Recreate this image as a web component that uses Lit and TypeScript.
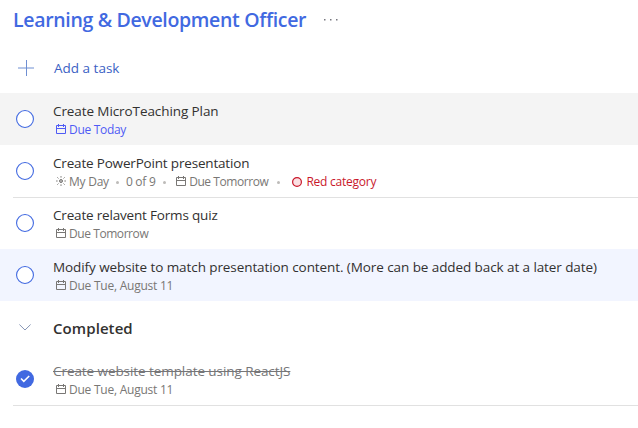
import { LitElement, html, svg, css, nothing } from "lit";
import { customElement, property } from "lit/decorators.js";
import { classMap } from "lit/directives/class-map.js";

interface Task {
  title: string;
  due: string;
  today?: boolean;
  tomorrow?: boolean;
  myDay?: boolean;
  steps?: string;
  category?: string;
  tone?: "hover" | "selected" | "ruled";
  done?: boolean;
}

const tasks: Task[] = [
  { title: "Create MicroTeaching Plan", due: "Due Today", today: true, tone: "hover" },
  { title: "Create PowerPoint presentation", due: "Due Tomorrow", tomorrow: true, myDay: true, steps: "0 of 9", category: "Red category" },
  { title: "Create relavent Forms quiz", due: "Due Tomorrow", tomorrow: true, tone: "ruled" },
  { title: "Modify website to match presentation content. (More can be added back at a later date)", due: "Due Tue, August 11", tone: "selected" },
];

const finished: Task[] = [{ title: "Create website template using ReactJS", due: "Due Tue, August 11", done: true }];

const calendar = html`<svg class="icon" width="10" height="10" viewBox="0 0 10 10" fill="none" stroke="currentColor">
  ${svg`<path d="M.5 1.500h9v8h-9zM.5 4.500h9M2.500 0v3M7.500 0v3"/>`}
</svg>`;

const sun = html`<svg class="icon" width="10" height="10" viewBox="0 0 10 10" fill="none" stroke="currentColor">
  ${svg`<circle cx="5" cy="5" r="1.500" fill="currentColor" fill-opacity=".5"/><path stroke-width=".9" d="M5 0v1.700M5 8.300v1.700M0 5h1.700M8.300 5H10M1.300 1.300l1.200 1.200M7.500 7.500l1.200 1.200M1.300 8.700l1.200-1.200M7.500 2.500l1.200-1.200"/>`}
</svg>`;

@customElement("task-row")
class TaskRow extends LitElement {
  @property({ attribute: false }) task!: Task;

  static styles = css`
    :host { display: block; }
    .row { display: flex; height: 52px; box-sizing: border-box; padding-left: 16px; }
    .hover { background: #f4f4f4; }
    .selected { background: #f2f5ff; }
    .selected .title { letter-spacing: -0.085px; }
    .plain .title, .ruled .title { letter-spacing: -0.180px; }
    .ruled { background: linear-gradient(#e1e1e1, #e1e1e1) 13px 0 / 100% 1px no-repeat; }
    .check { flex: none; width: 18px; height: 18px; margin-top: 17px; color: #4169e1; }
    .body { margin-left: 19px; padding-top: 8px; white-space: nowrap; }
    .title { font-size: 13.500px; line-height: 20px; letter-spacing: -0.090px; color: #323130; }
    .row .title.done { color: #767678; text-decoration: line-through; letter-spacing: -0.070px; }
    .meta { display: flex; align-items: center; height: 16px; margin: 1px 0 0 3px; font-size: 12px; letter-spacing: -0.240px; line-height: 16px; color: #797775; }
    .item { display: flex; align-items: center; gap: 3px; }
    .today { color: #4f5bf5; letter-spacing: -0.300px; }
    .tomorrow { letter-spacing: -0.430px; }
    .red { color: #c9182b; gap: 4px; }
    .icon { display: block; flex: none; margin-top: -2px; }
    .ring { display: block; flex: none; }
    .dot { width: 3px; height: 3px; border-radius: 50%; background: #bdbbb9; margin: 0 7px; }
    .dot.due { margin: 0 10px 0 7.500px; }
    .dot.wide { margin: 0 12px 0 9px; }
  `;

  render() {
    const t = this.task;
    return html`<div class=${classMap({ row: true, [t.tone ?? "plain"]: true })}>
      <svg class="check" viewBox="0 0 18 18" fill="none">
        ${t.done
          ? svg`<circle cx="9" cy="9" r="9" fill="currentColor"/><path d="M5 8.500l2.800 2.800L13.200 6" stroke="#fff" stroke-width="1.600"/>`
          : svg`<circle cx="9" cy="9" r="8.450" fill="#fff" stroke="currentColor" stroke-width="1.100"/>`}
      </svg>
      <div class="body">
        <div class=${classMap({ title: true, done: !!t.done })}>${t.title}</div>
        <div class="meta">
          ${t.myDay ? html`<span class="item">${sun}<span>My Day</span></span><i class="dot"></i>` : nothing}
          ${t.steps ? html`<span>${t.steps}</span><i class="dot due"></i>` : nothing}
          <span class=${classMap({ item: true, today: !!t.today, tomorrow: !!t.tomorrow })}>${calendar}<span>${t.due}</span></span>
          ${t.category
            ? html`<i class="dot wide"></i><span class="item red"><svg class="ring" width="10" height="10" viewBox="0 0 10 10"><circle cx="5" cy="5" r="4.400" fill="#fbe0e3" stroke="currentColor" stroke-width="1.200"/></svg><span>${t.category}</span></span>`
            : nothing}
        </div>
      </div>
    </div>`;
  }
}

@customElement("app-root")
class AppRoot extends LitElement {
  static styles = css`
    :host { display: block; height: 428px; overflow: hidden; background: #fff; font-family: "Open Sans", "Noto Sans", sans-serif; }
    .header { display: flex; align-items: center; height: 40px; padding-left: 13px; }
    .heading { margin: 0; font-size: 19.500px; font-weight: 600; line-height: 28px; letter-spacing: -0.330px; color: #4169e1; white-space: nowrap; }
    .more { display: block; margin-left: 17px; }
    .add { display: flex; align-items: center; height: 53px; box-sizing: border-box; padding: 2px 0 0 18px; color: #3b5fc4; font-size: 13.500px; }
    .add svg { margin-right: 20px; }
    .section { display: flex; align-items: center; height: 52px; padding-left: 19px; }
    .section h2 { margin: 2px 0 0 22px; font-size: 15px; font-weight: 600; line-height: 22px; letter-spacing: 0.080px; color: #323130; }
    .end { height: 1px; margin-left: 13px; background: #e1e1e1; }
  `;

  render() {
    return html`
      <header class="header">
        <h1 class="heading">Learning &amp; Development Officer</h1>
        <svg class="more" width="16" height="4" viewBox="0 0 16 4" fill="#77777f"><path d="M1 1h1.500v1.500H1zM7 1h1.500v1.500H7zM13 1h1.500v1.500H13z"/></svg>
      </header>
      <div class="add">
        <svg width="16" height="16" viewBox="0 0 16 16" stroke="#6f8fd2"><path d="M8.500 0v16M0 8h16"/></svg>
        <span>Add a task</span>
      </div>
      ${tasks.map((t) => html`<task-row .task=${t}></task-row>`)}
      <div class="section">
        <svg width="12" height="7" viewBox="0 0 12 7" fill="none" stroke="#8796b5"><path d="M.4.5L6 6 11.600.5"/></svg>
        <h2>Completed</h2>
      </div>
      ${finished.map((t) => html`<task-row .task=${t}></task-row>`)}
      <div class="end"></div>
    `;
  }
}
